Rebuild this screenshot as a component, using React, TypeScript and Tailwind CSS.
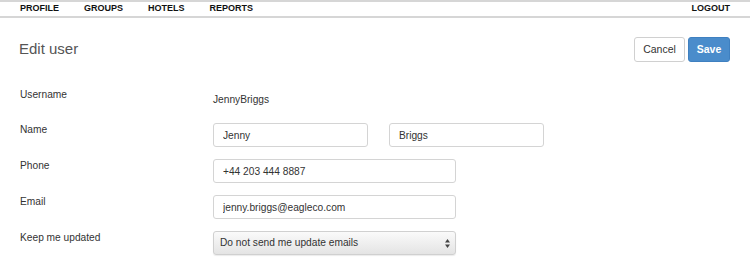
const NAV = ["PROFILE", "GROUPS", "HOTELS", "REPORTS"];

function Field({ label, children }: { label: string; children: React.ReactNode }) {
  return (
    <div className="flex h-[24px]">
      <div className="w-[193px] shrink-0 text-[10.2px] leading-[14px]">{label}</div>
      {children}
    </div>
  );
}

function TextInput({ value, className }: { value: string; className: string }) {
  return (
    <input
      readOnly
      value={value}
      className={`h-[24px] rounded-[3px] border border-[#d4d4d4] bg-white px-[9px] text-[10.2px] text-[#333] outline-none ${className}`}
    />
  );
}

export default function App() {
  return (
    <div className="h-[273px] w-[750px] bg-white font-['Liberation_Sans',Arial,sans-serif] text-[#333]">
      {/* Nav */}
      <div className="flex h-[18px] items-center border-y-2 border-[#d6d6d6] px-5 text-[9px] font-bold text-[#111]">
        <div className="flex gap-[25px]">
          {NAV.map((item) => (
            <span key={item}>{item}</span>
          ))}
        </div>
        <span className="ml-auto">LOGOUT</span>
      </div>

      <div className="px-5">
        {/* Header */}
        <div className="mt-[19px] flex items-center">
          <h1 className="ml-[-1px] text-[15px] font-light text-[#555]">Edit user</h1>
          <div className="ml-auto flex gap-[3px]">
            <button className="h-[25px] w-[51px] rounded-[3px] border border-[#d0d0d0] bg-white text-[10.5px] text-[#333]">
              Cancel
            </button>
            <button className="h-[25px] w-[42px] rounded-[3px] border border-[#3f80c0] bg-[#4a8ccb] text-[10.5px] font-bold text-white">
              Save
            </button>
          </div>
        </div>

        {/* Form */}
        <div className="mt-[26px] flex flex-col gap-[12px]">
          <div className="mb-[-1px] flex h-[24px]">
            <div className="w-[193px] shrink-0 text-[10.2px] leading-[14px]">Username</div>
            <div className="pt-[5px] text-[10.2px] leading-[14px]">JennyBriggs</div>
          </div>
          <Field label="Name">
            <TextInput value="Jenny" className="w-[155px]" />
            <TextInput value="Briggs" className="ml-[21px] w-[155px]" />
          </Field>
          <Field label="Phone">
            <TextInput value="+44 203 444 8887" className="w-[243px]" />
          </Field>
          <Field label="Email">
            <TextInput value="jenny.briggs@eagleco.com" className="w-[243px]" />
          </Field>
          <Field label="Keep me updated">
            <div className="flex h-[24px] w-[243px] items-center rounded-[3px] border border-[#d0d0d0] bg-gradient-to-b from-[#fafafa] to-[#e4e4e4] pl-[6px] pr-[5px] text-[10.2px] shadow-[0_1px_1px_rgba(0,0,0,0.08)]">
              <span>Do not send me update emails</span>
              <svg className="ml-auto" width="5" height="9" viewBox="0 0 5 9">
                <path d="M2.5 0 L5 3.5 H0 Z" fill="#444" />
                <path d="M2.5 9 L5 5.5 H0 Z" fill="#444" />
              </svg>
            </div>
          </Field>
        </div>
      </div>
    </div>
  );
}
